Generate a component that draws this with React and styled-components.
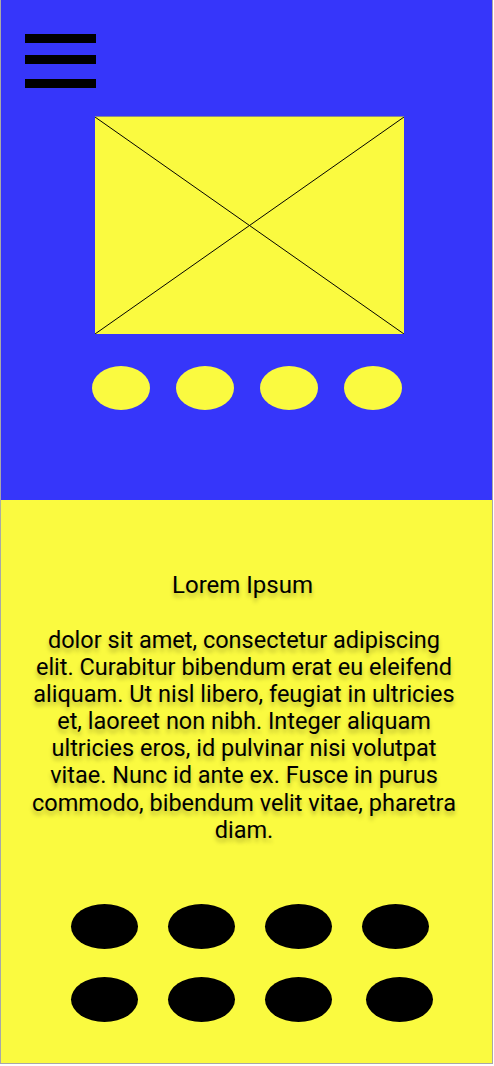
import React from "react";
import styled, { createGlobalStyle } from "styled-components";

const GlobalStyle = createGlobalStyle`
	html, body {
		margin: 0;
		padding: 0;
		background: #ffffff;
	}
	body {
		font-family: Roboto, "Liberation Sans", sans-serif;
	}
`;

const BLUE = "#3636fa";
const YELLOW = "#fafa40";

const topDots = [0, 1, 2, 3];
const bottomDots = [0, 1, 2, 3, 4, 5, 6, 7];

const text =
	"dolor sit amet, consectetur adipiscing elit. Curabitur bibendum erat eu eleifend aliquam. Ut nisl libero, feugiat in ultricies et, laoreet non nibh. Integer aliquam ultricies eros, id pulvinar nisi volutpat vitae. Nunc id ante ex. Fusce in purus commodo, bibendum velit vitae, pharetra diam.";

function App() {
	return (
		<>
			<GlobalStyle />
			<Frame>
				<Hero>
					<MenuButton aria-label="menu">
						<Bar />
						<Bar $gap={12} />
						<Bar $gap={15} />
					</MenuButton>
					<Placeholder>
						<svg width="100%" height="100%" viewBox="0 0 309 218" preserveAspectRatio="none">
							<line x1="0" y1="0" x2="309" y2="218" stroke="#000" strokeWidth="1" />
							<line x1="0" y1="218" x2="309" y2="0" stroke="#000" strokeWidth="1" />
						</svg>
					</Placeholder>
					<Dots>
						{topDots.map((i) => (
							<Dot key={i} />
						))}
					</Dots>
				</Hero>
				<Content>
					<Title>Lorem Ipsum</Title>
					<Body>{text}</Body>
					<Grid>
						{bottomDots.map((i) => (
							<BlackDot key={i} $shift={i === 7 ? 4 : 0} />
						))}
					</Grid>
				</Content>
			</Frame>
		</>
	);
}

export default App;

const Frame = styled.div`
	width: 493px;
	height: 1064px;
	box-sizing: border-box;
	border: 1px solid #a8a8a8;
	border-top: none;
	display: flex;
	flex-direction: column;
	background: ${YELLOW};
`;

const Hero = styled.div`
	height: 500px;
	background: ${BLUE};
	display: flex;
	flex-direction: column;
	padding: 34px 0 0 24px;
	box-sizing: border-box;
`;

const MenuButton = styled.div`
	display: flex;
	flex-direction: column;
	width: 71px;
`;

const Bar = styled.div`
	height: 9px;
	background: #000;
	margin-top: ${(p) => p.$gap || 0}px;
`;

const Placeholder = styled.div`
	width: 309px;
	height: 218px;
	margin: 28px 0 0 70px;
	background: ${YELLOW};
	border-top: 1px solid #8a8a8a;
	box-sizing: border-box;
	svg {
		display: block;
	}
`;

const Dots = styled.div`
	display: flex;
	gap: 26px;
	margin: 32px 0 0 67px;
`;

const Dot = styled.div`
	width: 58px;
	height: 44px;
	border-radius: 50%;
	background: ${YELLOW};
`;

const Content = styled.div`
	flex: 1;
	display: flex;
	flex-direction: column;
	align-items: center;
	padding-top: 71px;
`;

const Title = styled.div`
	font-size: 24px;
	color: #000;
	text-shadow: 0 4px 4px rgba(0, 0, 0, 0.25);
	margin-left: -8px;
`;

const Body = styled.p`
	width: 432px;
	margin: 28px 0 0 -5px;
	font-size: 23.5px;
	line-height: 27.1px;
	text-align: center;
	color: #000;
	text-shadow: 0 4px 4px rgba(0, 0, 0, 0.25);
`;

const Grid = styled.div`
	display: grid;
	grid-template-columns: repeat(4, 67px);
	column-gap: 30px;
	row-gap: 28px;
	margin: 60px 0 0 7px;
`;

const BlackDot = styled.div`
	height: 45px;
	border-radius: 50%;
	background: #000;
	transform: translateX(${(p) => p.$shift}px);
`;
